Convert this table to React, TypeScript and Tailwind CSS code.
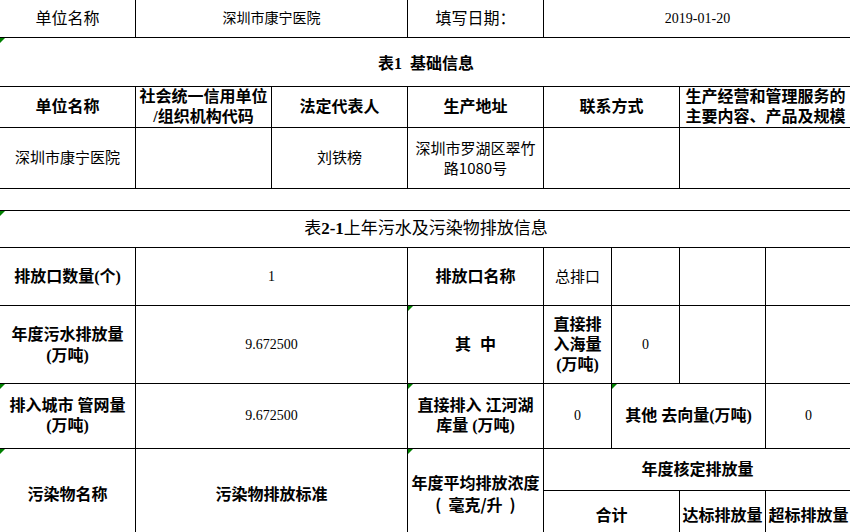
import type { ReactNode } from 'react'

// green "comment" marker in the top-left corner of a cell
const Tri = () => (
  <span className="absolute left-0 top-0 h-0 w-0 border-t-[5px] border-r-[5px] border-t-[#008000] border-r-transparent" />
)

interface CellProps {
  className?: string
  children?: ReactNode
  tri?: boolean
}

function Cell({ className = '', children, tri }: CellProps) {
  return (
    <div
      className={`relative flex items-center justify-center text-center border-r border-b border-black leading-[20px] ${className}`}
    >
      {tri && <Tri />}
      <div>{children}</div>
    </div>
  )
}

const H = 'font-bold text-[16px]'
const V = 'text-[15px]'
const N = "text-[14px] font-['Liberation_Serif',serif]"

export default function App() {
  return (
    <div className="w-[850px] h-[532px] overflow-hidden bg-white text-black font-['Liberation_Serif','Noto_Sans_CJK_SC',serif]">
      <div className="grid grid-cols-[136px_136px_136px_136px_68px_68px_86px_86px] grid-rows-[38px_49px_41px_61px_22px_37px_58px_78px_65px_42px_51px]">
        {/* header line */}
        <Cell className="text-[16px]">单位名称</Cell>
        <Cell className="col-span-2 text-[14px]">深圳市康宁医院</Cell>
        <Cell className="text-[16px]">填写日期：</Cell>
        <Cell className={`col-span-4 ${N}`}>2019-01-20</Cell>

        {/* 表1 */}
        <div className="relative col-span-8 flex items-center justify-center border-b border-black pt-1 text-[16px] font-bold">
          <Tri />
          <span className="whitespace-pre">表1  基础信息</span>
        </div>
        <Cell className={H}>单位名称</Cell>
        <Cell className={`${H} leading-[19px]`}>
          社会统一信用单位
          <br />
          /组织机构代码
        </Cell>
        <Cell className={H}>法定代表人</Cell>
        <Cell className={H}>生产地址</Cell>
        <Cell className={`col-span-2 ${H}`}>联系方式</Cell>
        <Cell className={`col-span-2 ${H} leading-[19px]`}>
          生产经营和管理服务的
          <br />
          主要内容、产品及规模
        </Cell>

        <Cell className={V}>深圳市康宁医院</Cell>
        <Cell />
        <Cell className={V}>刘铁榜</Cell>
        <Cell className={`${V} font-['Noto_Sans_CJK_SC',sans-serif]`}>
          深圳市罗湖区翠竹
          <br />
          路1080号
        </Cell>
        <Cell className="col-span-2" />
        <Cell className="col-span-2" />

        <div className="col-span-8 border-b border-black" />

        {/* 表2-1 */}
        <div className="relative col-span-8 flex items-center justify-center border-b border-black text-[17px]">
          <Tri />
          <span>
            表<b>2-1</b>上年污水及污染物排放信息
          </span>
        </div>

        <Cell className={H}>排放口数量(个)</Cell>
        <Cell className={`col-span-2 ${N}`}>1</Cell>
        <Cell className={H}>排放口名称</Cell>
        <Cell className={V}>总排口</Cell>
        <Cell />
        <Cell />
        <Cell />

        <Cell className={`${H} leading-[21px]`}>
          年度污水排放量
          <br />
          (万吨)
        </Cell>
        <Cell className={`col-span-2 ${N}`}>9.672500</Cell>
        <Cell className={H} tri>
          其<span className="ml-[9px]">中</span>
        </Cell>
        <Cell className={H}>
          直接排
          <br />
          入海量
          <br />
          (万吨)
        </Cell>
        <Cell className={N}>0</Cell>
        <Cell />
        <Cell />

        <Cell className={H} tri>
          排入城市 管网量
          <br />
          (万吨)
        </Cell>
        <Cell className={`col-span-2 ${N}`}>9.672500</Cell>
        <Cell className={H} tri>
          直接排入 江河湖
          <br />
          库量 (万吨)
        </Cell>
        <Cell className={N}>0</Cell>
        <Cell className={`col-span-2 ${H}`} tri>
          其他 去向量(万吨)
        </Cell>
        <Cell className={N}>0</Cell>

        <Cell className={`row-span-2 ${H}`} tri>
          污染物名称
        </Cell>
        <Cell className={`col-span-2 row-span-2 ${H}`}>污染物排放标准</Cell>
        <Cell className={`row-span-2 ${H}`} tri>
          年度平均排放浓度
          <br />
          <span className="font-['Noto_Sans_CJK_SC',sans-serif]">
            <span className="mr-[7px]">(</span>毫克/升<span className="ml-[7px]">)</span>
          </span>
        </Cell>
        <Cell className={`col-span-4 ${H}`}>年度核定排放量</Cell>
        <Cell className={`col-span-2 ${H}`}>合计</Cell>
        <Cell className={`${H} whitespace-nowrap`}>达标排放量</Cell>
        <Cell className={`${H} whitespace-nowrap`}>超标排放量</Cell>
      </div>
    </div>
  )
}
